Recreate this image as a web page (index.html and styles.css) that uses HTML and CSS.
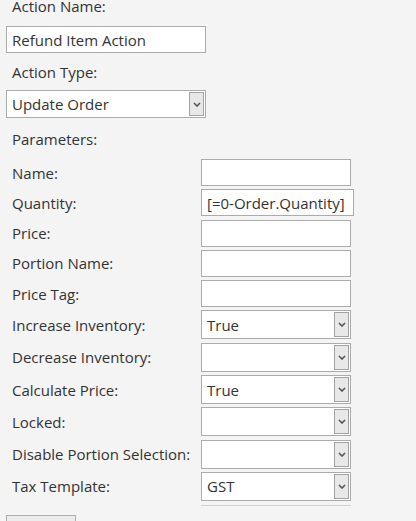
FILE: index.html
```html
<!doctype html>
<html lang="en">
  <head>
    <meta charset="UTF-8" />
    <meta name="viewport" content="width=device-width, initial-scale=1.0" />
    <title>Action Editor</title>
    <link rel="stylesheet" href="styles.css">
  </head>
  <body>
    <main class="editor">
      <span class="caption first">Action Name:</span>
      <input class="field field-main" type="text" value="Refund Item Action" />
      <span class="caption">Action Type:</span>
      <div class="combo combo-main">
        <span class="combo-text">Update Order</span>
        <span class="drop"><svg width="8" height="5" viewBox="0 0 8 5"><path d="M1 1l3 3 3-3" /></svg></span>
      </div>
      <span class="caption params-title">Parameters:</span>

      <div class="params">
        <span class="name">Name:</span>
        <input class="field" type="text" value="" />

        <span class="name">Quantity:</span>
        <input class="field wide" type="text" value="[=0-Order.Quantity]" />

        <span class="name">Price:</span>
        <input class="field" type="text" value="" />

        <span class="name">Portion Name:</span>
        <input class="field" type="text" value="" />

        <span class="name">Price Tag:</span>
        <input class="field" type="text" value="" />

        <span class="name">Increase Inventory:</span>
        <div class="combo">
          <span class="combo-text">True</span>
          <span class="drop"><svg width="8" height="5" viewBox="0 0 8 5"><path d="M1 1l3 3 3-3" /></svg></span>
        </div>

        <span class="name">Decrease Inventory:</span>
        <div class="combo">
          <span class="combo-text"></span>
          <span class="drop"><svg width="8" height="5" viewBox="0 0 8 5"><path d="M1 1l3 3 3-3" /></svg></span>
        </div>

        <span class="name">Calculate Price:</span>
        <div class="combo">
          <span class="combo-text">True</span>
          <span class="drop"><svg width="8" height="5" viewBox="0 0 8 5"><path d="M1 1l3 3 3-3" /></svg></span>
        </div>

        <span class="name">Locked:</span>
        <div class="combo">
          <span class="combo-text"></span>
          <span class="drop"><svg width="8" height="5" viewBox="0 0 8 5"><path d="M1 1l3 3 3-3" /></svg></span>
        </div>

        <span class="name">Disable Portion Selection:</span>
        <div class="combo">
          <span class="combo-text"></span>
          <span class="drop"><svg width="8" height="5" viewBox="0 0 8 5"><path d="M1 1l3 3 3-3" /></svg></span>
        </div>

        <span class="name">Tax Template:</span>
        <div class="combo">
          <span class="combo-text">GST</span>
          <span class="drop"><svg width="8" height="5" viewBox="0 0 8 5"><path d="M1 1l3 3 3-3" /></svg></span>
        </div>

        <span></span>
        <div class="rule"></div>
      </div>

      <div class="actions">
        <button class="btn" type="button">Save</button>
      </div>
    </main>
  </body>
</html>
```

FILE: styles.css
```css
* {
  margin: 0;
  padding: 0;
  box-sizing: border-box;
}
:root {
  --page-background: #f4f4f4;
  --field-border: #ababab;
  --text-color: #333;
}
body {
  background-color: var(--page-background);
  color: var(--text-color);
  font-family: "Open Sans", "Noto Sans", sans-serif;
  font-size: 15px;
  line-height: 20px;
  overflow: hidden;
  height: 521px;
}
.editor {
  display: flex;
  flex-direction: column;
  align-items: flex-start;
  padding-left: 6px;
}
.caption {
  display: block;
  margin: 9px 0 0 6px;
}
.caption.first {
  margin-top: -4px;
}
.field {
  display: block;
  height: 27px;
  width: 150px;
  padding: 0 5px;
  border: 1px solid var(--field-border);
  background-color: #fff;
  color: var(--text-color);
  font: inherit;
  outline: none;
}
.field-main {
  width: 200px;
  margin-top: 10px;
}
.field.wide {
  width: 153px;
}
.combo {
  display: flex;
  align-items: center;
  height: 29px;
  width: 150px;
  padding: 1px;
  border: 1px solid var(--field-border);
  background-color: #fff;
}
.combo-main {
  width: 200px;
  height: 28px;
  margin-top: 8px;
}
.combo-text {
  flex: 1;
  padding-left: 4px;
}
.drop {
  display: flex;
  align-items: center;
  justify-content: center;
  width: 15px;
  height: 100%;
  border: 1px solid #a2a2a2;
  background-color: #e8e8e8;
}
.drop svg path {
  fill: none;
  stroke: #555;
  stroke-width: 1.6;
}
.params-title {
  margin-top: 11px;
}
.params {
  display: grid;
  grid-template-columns: 189px auto;
  row-gap: 3.3px;
  align-items: center;
  margin: 10px 0 0 6px;
}
.rule {
  height: 1px;
  width: 150px;
  margin-top: 0.5px;
  background-color: #d2d2d2;
}
.actions {
  margin-top: 9px;
}
.btn {
  display: block;
  width: 70px;
  height: 34px;
  border: 1px solid #adadad;
  background-color: #ececec;
  color: var(--text-color);
  font: inherit;
}
```
